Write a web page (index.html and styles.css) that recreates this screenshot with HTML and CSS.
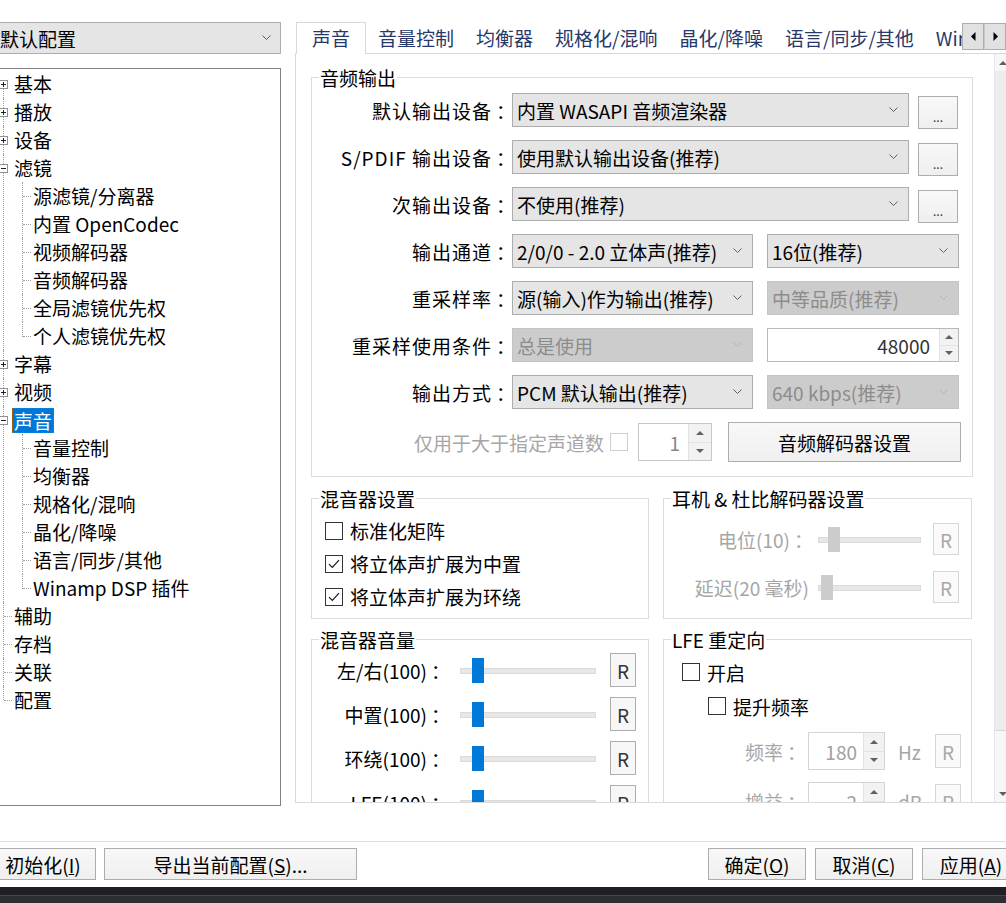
FILE: index.html
```html
<!DOCTYPE html>
<html lang="zh-CN">
<head>
<meta charset="utf-8">
<title>选项</title>
<link rel="stylesheet" href="styles.css">
</head>
<body>
<div class="dialog">
  <div class="main">
    <div class="left">
      <div class="combo profile"><span class="val">默认配置</span><svg class="chev" width="9" height="6" viewBox="0 0 9 6"><path d="M0.5 0.5 L4.5 4.5 L8.5 0.5" fill="none" stroke="#606060"/></svg></div>
      <div class="tree">
        <ul class="l1">
          <li class="first"><div class="row"><span class="box plus"></span><span class="lbl">基本</span></div></li>
          <li><div class="row"><span class="box plus"></span><span class="lbl">播放</span></div></li>
          <li><div class="row"><span class="box plus"></span><span class="lbl">设备</span></div></li>
          <li><div class="row"><span class="box minus"></span><span class="lbl">滤镜</span></div>
            <ul class="l2">
              <li>源滤镜/分离器</li>
              <li>内置 OpenCodec</li>
              <li>视频解码器</li>
              <li>音频解码器</li>
              <li>全局滤镜优先权</li>
              <li>个人滤镜优先权</li>
            </ul>
          </li>
          <li><div class="row"><span class="box plus"></span><span class="lbl">字幕</span></div></li>
          <li><div class="row"><span class="box plus"></span><span class="lbl">视频</span></div></li>
          <li><div class="row"><span class="box minus"></span><span class="lbl sel">声音</span></div>
            <ul class="l2">
              <li>音量控制</li>
              <li>均衡器</li>
              <li>规格化/混响</li>
              <li>晶化/降噪</li>
              <li>语言/同步/其他</li>
              <li>Winamp DSP 插件</li>
            </ul>
          </li>
          <li class="leaf"><div class="row"><span class="lbl">辅助</span></div></li>
          <li class="leaf"><div class="row"><span class="lbl">存档</span></div></li>
          <li class="leaf"><div class="row"><span class="lbl">关联</span></div></li>
          <li class="leaf last"><div class="row"><span class="lbl">配置</span></div></li>
        </ul>
      </div>
    </div>

    <div class="tabctl">
      <div class="tabbar">
        <div class="tabs">
          <div class="tab active">声音</div>
          <div class="tab">音量控制</div>
          <div class="tab">均衡器</div>
          <div class="tab">规格化/混响</div>
          <div class="tab">晶化/降噪</div>
          <div class="tab">语言/同步/其他</div>
          <div class="tab">Winamp DSP 插件</div>
        </div>
        <div class="tabscroll">
          <div class="sbtn"><svg width="5" height="9" viewBox="0 0 5 9"><path d="M4.5 0 L0 4.5 L4.5 9 Z" fill="#000"/></svg></div>
          <div class="sbtn"><svg width="5" height="9" viewBox="0 0 5 9"><path d="M0.5 0 L5 4.5 L0.5 9 Z" fill="#000"/></svg></div>
        </div>
      </div>
      <div class="panel">
        <div class="content">
          <fieldset class="grp g-out">
            <legend>音频输出</legend>
            <div class="frow first">
              <span class="flabel">默认输出设备<span class="colon">：</span></span>
              <div class="combo w397"><span class="val">内置 WASAPI 音频渲染器</span><svg class="chev" width="9" height="6" viewBox="0 0 9 6"><path d="M0.5 0.5 L4.5 4.5 L8.5 0.5" fill="none" stroke="#606060"/></svg></div>
              <div class="btn dots">...</div>
            </div>
            <div class="frow">
              <span class="flabel">S/PDIF 输出设备<span class="colon">：</span></span>
              <div class="combo w397"><span class="val">使用默认输出设备(推荐)</span><svg class="chev" width="9" height="6" viewBox="0 0 9 6"><path d="M0.5 0.5 L4.5 4.5 L8.5 0.5" fill="none" stroke="#606060"/></svg></div>
              <div class="btn dots">...</div>
            </div>
            <div class="frow">
              <span class="flabel">次输出设备<span class="colon">：</span></span>
              <div class="combo w397"><span class="val">不使用(推荐)</span><svg class="chev" width="9" height="6" viewBox="0 0 9 6"><path d="M0.5 0.5 L4.5 4.5 L8.5 0.5" fill="none" stroke="#606060"/></svg></div>
              <div class="btn dots">...</div>
            </div>
            <div class="frow">
              <span class="flabel">输出通道<span class="colon">：</span></span>
              <div class="combo w241"><span class="val">2/0/0 - 2.0 立体声(推荐)</span><svg class="chev" width="9" height="6" viewBox="0 0 9 6"><path d="M0.5 0.5 L4.5 4.5 L8.5 0.5" fill="none" stroke="#606060"/></svg></div>
              <div class="combo w192"><span class="val">16位(推荐)</span><svg class="chev" width="9" height="6" viewBox="0 0 9 6"><path d="M0.5 0.5 L4.5 4.5 L8.5 0.5" fill="none" stroke="#606060"/></svg></div>
            </div>
            <div class="frow">
              <span class="flabel">重采样率<span class="colon">：</span></span>
              <div class="combo w241"><span class="val">源(输入)作为输出(推荐)</span><svg class="chev" width="9" height="6" viewBox="0 0 9 6"><path d="M0.5 0.5 L4.5 4.5 L8.5 0.5" fill="none" stroke="#606060"/></svg></div>
              <div class="combo w192 dis"><span class="val">中等品质(推荐)</span><svg class="chev" width="9" height="6" viewBox="0 0 9 6"><path d="M0.5 0.5 L4.5 4.5 L8.5 0.5" fill="none" stroke="#b4b4b4"/></svg></div>
            </div>
            <div class="frow">
              <span class="flabel">重采样使用条件<span class="colon">：</span></span>
              <div class="combo w241 dis"><span class="val">总是使用</span><svg class="chev" width="9" height="6" viewBox="0 0 9 6"><path d="M0.5 0.5 L4.5 4.5 L8.5 0.5" fill="none" stroke="#b4b4b4"/></svg></div>
              <div class="spin s48"><span class="num">48000</span><div class="spinbtns"><div class="sb"><span class="tri up"></span></div><div class="sb"><span class="tri dn"></span></div></div></div>
            </div>
            <div class="frow">
              <span class="flabel">输出方式<span class="colon">：</span></span>
              <div class="combo w241"><span class="val">PCM 默认输出(推荐)</span><svg class="chev" width="9" height="6" viewBox="0 0 9 6"><path d="M0.5 0.5 L4.5 4.5 L8.5 0.5" fill="none" stroke="#606060"/></svg></div>
              <div class="combo w192 dis"><span class="val">640 kbps(推荐)</span><svg class="chev" width="9" height="6" viewBox="0 0 9 6"><path d="M0.5 0.5 L4.5 4.5 L8.5 0.5" fill="none" stroke="#b4b4b4"/></svg></div>
            </div>
            <div class="frow lastrow">
              <span class="distext">仅用于大于指定声道数</span>
              <span class="cb discb"></span>
              <div class="spin s1"><span class="num">1</span><div class="spinbtns"><div class="sb"><span class="tri up"></span></div><div class="sb"><span class="tri dn"></span></div></div></div>
              <div class="btn decbtn">音频解码器设置</div>
            </div>
          </fieldset>

          <div class="grprow">
            <fieldset class="grp g-mix">
              <legend>混音器设置</legend>
              <div class="crow"><span class="cb"></span><span>标准化矩阵</span></div>
              <div class="crow"><span class="cb"><svg width="16" height="16" viewBox="0 0 16 16"><path d="M3 8.2 L6.3 11.5 L13 4.2" fill="none" stroke="#1a1a1a" stroke-width="1.2"/></svg></span><span>将立体声扩展为中置</span></div>
              <div class="crow"><span class="cb"><svg width="16" height="16" viewBox="0 0 16 16"><path d="M3 8.2 L6.3 11.5 L13 4.2" fill="none" stroke="#1a1a1a" stroke-width="1.2"/></svg></span><span>将立体声扩展为环绕</span></div>
            </fieldset>
            <fieldset class="grp g-dolby">
              <legend>耳机 &amp; 杜比解码器设置</legend>
              <div class="srow">
                <span class="slabel dim">电位(10)<span class="colon">：</span></span>
                <div class="slider sd"><div class="track"></div><div class="thumb" style="left:10px"></div></div>
                <div class="rbtn rdis">R</div>
              </div>
              <div class="srow">
                <span class="slabel dim">延迟(20 毫秒)</span>
                <div class="slider sd"><div class="track"></div><div class="thumb" style="left:3px"></div></div>
                <div class="rbtn rdis">R</div>
              </div>
            </fieldset>
          </div>

          <div class="grprow g3">
            <fieldset class="grp g-vol">
              <legend>混音器音量</legend>
              <div class="vrow">
                <span class="vlabel">左/右(100)<span class="colon">：</span></span>
                <div class="slider sv"><div class="track"></div><div class="thumb on" style="left:12px"></div></div>
                <div class="rbtn">R</div>
              </div>
              <div class="vrow">
                <span class="vlabel">中置(100)<span class="colon">：</span></span>
                <div class="slider sv"><div class="track"></div><div class="thumb on" style="left:12px"></div></div>
                <div class="rbtn">R</div>
              </div>
              <div class="vrow">
                <span class="vlabel">环绕(100)<span class="colon">：</span></span>
                <div class="slider sv"><div class="track"></div><div class="thumb on" style="left:12px"></div></div>
                <div class="rbtn">R</div>
              </div>
              <div class="vrow">
                <span class="vlabel">LFE(100)<span class="colon">：</span></span>
                <div class="slider sv"><div class="track"></div><div class="thumb on" style="left:12px"></div></div>
                <div class="rbtn">R</div>
              </div>
            </fieldset>
            <fieldset class="grp g-lfe">
              <legend>LFE 重定向</legend>
              <div class="lrow l-en"><span class="cb"></span><span>开启</span></div>
              <div class="lrow l-up"><span class="cb"></span><span>提升频率</span></div>
              <div class="lrow l-spin">
                <span class="llabel dim">频率<span class="colon">：</span></span>
                <div class="spin sl"><span class="num">180</span><div class="spinbtns"><div class="sb"><span class="tri up"></span></div><div class="sb"><span class="tri dn"></span></div></div></div>
                <span class="unit dim">Hz</span>
                <div class="rbtn rdis">R</div>
              </div>
              <div class="lrow l-spin">
                <span class="llabel dim">增益<span class="colon">：</span></span>
                <div class="spin sl"><span class="num">-2</span><div class="spinbtns"><div class="sb"><span class="tri up"></span></div><div class="sb"><span class="tri dn"></span></div></div></div>
                <span class="unit dim">dB</span>
                <div class="rbtn rdis">R</div>
              </div>
            </fieldset>
          </div>
        </div>
        <div class="vscroll">
          <div class="sarrow"><span class="tri up"></span></div>
          <div class="vthumb"></div>
          <div class="vtrack"></div>
          <div class="sarrow"><span class="tri dn"></span></div>
        </div>
      </div>
    </div>
  </div>

  <div class="footer">
    <div class="fgroup">
      <div class="btn fbtn b-init">初始化(<u>I</u>)</div>
      <div class="btn fbtn b-export">导出当前配置(<u>S</u>)...</div>
    </div>
    <div class="fgroup right">
      <div class="btn fbtn b-std">确定(<u>O</u>)</div>
      <div class="btn fbtn b-std">取消(<u>C</u>)</div>
      <div class="btn fbtn b-std">应用(<u>A</u>)</div>
    </div>
  </div>
  <div class="taskbar"></div>
</div>
</body>
</html>
```

FILE: styles.css
```css
* { box-sizing: border-box; }
html, body { margin: 0; padding: 0; }
body {
  width: 1006px;
  height: 903px;
  overflow: hidden;
  background: #ffffff;
  font-family: "Noto Sans CJK SC", "Microsoft YaHei", sans-serif;
  font-size: 19px;
  color: #000;
}
.dialog {
  margin-left: -10px;
  width: 1022px;
  height: 903px;
  display: flex;
  flex-direction: column;
}
.main {
  display: flex;
  gap: 14px;
  padding-top: 22px;
  height: 806px;
}
.colon { display: inline-block; width: 19px; text-align: center; padding-left: 4px; letter-spacing: 0; }

/* ---------- combos ---------- */
.combo {
  display: flex;
  align-items: center;
  height: 34px;
  background: #e5e5e5;
  border: 1px solid #adadad;
  padding: 0 10px 0 4px;
  white-space: nowrap;
  flex: none;
}
.combo .val { flex: 1; }
.combo .chev { flex: none; }
.combo.dis { background: #cccccc; border-color: #c4c4c4; color: #8c8c8c; }

/* ---------- left column ---------- */
.left { width: 291px; display: flex; flex-direction: column; flex: none; }
.profile { height: 32px; padding-left: 9px; padding-right: 9px; }
.tree {
  margin-top: 14px;
  flex: 1;
  border: 1px solid #828282;
  padding: 1px 0 0 9px;
  overflow: hidden;
  background: #fff;
}
.tree ul { list-style: none; margin: 0; padding: 0; }
.l1 > li { position: relative; }
.l1 > li::before {
  content: "";
  position: absolute;
  left: 3px; top: 0; bottom: 0;
  border-left: 1px dotted #a0a0a0;
}
.l1 > li.first::before { top: 14px; }
.l1 > li.last::before { bottom: auto; height: 14px; }
.row {
  position: relative;
  height: 28px;
  display: flex;
  align-items: center;
  padding-left: 14px;
  padding-bottom: 2px;
  white-space: nowrap;
}
.l1 > li.leaf > .row::before {
  content: "";
  position: absolute;
  left: 4px; top: 14px;
  width: 8px;
  border-top: 1px dotted #a0a0a0;
}
.box {
  position: absolute;
  left: -1px; top: 10px;
  width: 9px; height: 9px;
  border: 1px solid #919191;
  background: #fff;
  z-index: 1;
}
.box::before {
  content: "";
  position: absolute;
  left: 1px; top: 3px;
  width: 5px; height: 1px;
  background: #222;
}
.box.plus::after {
  content: "";
  position: absolute;
  left: 3px; top: 1px;
  width: 1px; height: 5px;
  background: #222;
}
.lbl { line-height: 25px; }
.sel {
  background: #0078d7;
  color: #fff;
  padding: 0 2px;
  margin-left: -2px;
  margin-top: 2px;
  height: 25px;
  outline: 1px dotted #9a6a1a;
  outline-offset: -1px;
}
.l2 > li {
  position: relative;
  height: 28px;
  padding-left: 33px;
  padding-bottom: 2px;
  display: flex;
  align-items: center;
  white-space: nowrap;
}
.l2 > li::before {
  content: "";
  position: absolute;
  left: 22px; top: 0;
  height: 28px;
  border-left: 1px dotted #a0a0a0;
}
.l2 > li:last-child::before { height: 15px; }
.l2 > li::after {
  content: "";
  position: absolute;
  left: 23px; top: 14px;
  width: 8px;
  border-top: 1px dotted #a0a0a0;
}

/* ---------- tab control ---------- */
.tabctl { width: 717px; flex: none; display: flex; flex-direction: column; }
.tabbar { display: flex; height: 31px; width: 717px; }
.tabs { flex: none; width: 667px; display: flex; overflow: hidden; height: 32px; }
.tab {
  flex: none;
  padding: 0 11px;
  height: 32px;
  line-height: 31px;
  white-space: nowrap;
  color: #27386a;
}
.tab.active {
  position: relative;
  z-index: 2;
  margin-left: 1px;
  margin-right: 1px;
  padding: 0 15px;
  border: 1px solid #d9d9d9;
  border-bottom: none;
  background: #fff;
  line-height: 29px;
}
.tabscroll { display: flex; margin-top: 1px; height: 27px; width: 44px; flex: none; }
.sbtn {
  width: 22px; height: 27px;
  flex: none;
  border: 1px solid #adadad;
  background: #e1e1e1;
  display: flex; align-items: center; justify-content: center;
}
.sbtn + .sbtn { border-left: 1px solid #c8c8c8; }
.tri { width: 0; height: 0; display: block; }
.tri.up { border-left: 4px solid transparent; border-right: 4px solid transparent; border-bottom: 4px solid #606060; }
.tri.dn { border-left: 4px solid transparent; border-right: 4px solid transparent; border-top: 4px solid #606060; }

.panel {
  height: 750px;
  border: 1px solid #d9d9d9;
  display: flex;
  background: #fff;
}
.content { flex: 1; min-width: 0; overflow: hidden; padding-left: 15px; }
.vscroll {
  width: 17px;
  flex: none;
  display: flex;
  flex-direction: column;
  background: #f7f7f7;
  border-left: 1px solid #e6e6e6;
}
.sarrow { height: 17px; display: flex; align-items: center; justify-content: center; flex: none; }
.vthumb { height: 660px; background: #ececec; border-bottom: 1px solid #dadada; flex: none; }
.vtrack { flex: 1; }

/* ---------- group boxes ---------- */
.grp {
  border: 1px solid #dcdcdc;
  margin: 0;
  padding: 0;
  min-width: 0;
}
.grp legend {
  padding: 0 1px;
  margin-left: 7px;
  line-height: 19px;
  font-size: 19px;
}
.g-out { width: 662px; margin-top: 14px; padding-bottom: 14px; }
.frow { display: flex; align-items: center; height: 34px; margin-top: 13px; }
.frow.first { margin-top: 6px; }
.flabel { width: 199px; text-align: right; white-space: nowrap; margin-right: 1px; flex: none; letter-spacing: 1px; }
.w397 { width: 397px; }
.w241 { width: 241px; }
.w192 { width: 192px; margin-left: 14px; }
.btn {
  border: 1px solid #adadad;
  background: linear-gradient(#f8f8f8, #efefef);
  display: flex;
  align-items: center;
  justify-content: center;
  white-space: nowrap;
  flex: none;
}
.dots { width: 40px; height: 33px; margin-left: 9px; margin-top: 5px; font-size: 12px; padding-top: 8px; color: #333; }

.spin {
  display: flex;
  background: #fff;
  border: 1px solid #b8b8b8;
  flex: none;
}
.spin .num { flex: 1; text-align: right; align-self: center; }
.spinbtns { width: 19px; display: flex; flex-direction: column; border-left: 1px solid #e2e2e2; flex: none; }
.sb { flex: 1; display: flex; align-items: center; justify-content: center; background: #f2f2f2; }
.sb + .sb { border-top: 1px solid #e2e2e2; }
.s48 { width: 192px; height: 34px; margin-left: 14px; }
.s48 .num { padding-right: 9px; color: #333; }

.frow.lastrow { height: 40px; justify-content: flex-end; padding-right: 11px; }
.distext { color: #a6a6a6; white-space: nowrap; }
.cb {
  width: 18px; height: 18px;
  border: 1px solid #333;
  background: #fff;
  display: flex; align-items: center; justify-content: center;
  flex: none;
}
.cb.discb { border-color: #cfcfcf; margin-left: 6px; }
.s1 { width: 74px; height: 38px; margin-left: 10px; border-color: #c8c8c8; }
.s1 .num { padding-right: 8px; color: #888; }
.s1 .spinbtns { width: 23px; }
.decbtn { width: 233px; height: 40px; margin-left: 16px; }

.grprow { display: flex; gap: 14px; margin-top: 12px; }
.grprow.g3 { margin-top: 11px; }
.g-mix { width: 338px; padding-bottom: 5px; }
.g-dolby { width: 309px; }
.crow { display: flex; align-items: center; height: 33px; padding-left: 13px; white-space: nowrap; }
.g-mix .crow:first-of-type { margin-top: 6px; }
.crow .cb { margin-right: 7px; }

.dim { color: #a6a6a6; }
.srow { display: flex; align-items: center; height: 48px; }
.g-dolby .srow:first-of-type { margin-top: 7px; }
.slabel { width: 145px; text-align: right; white-space: nowrap; flex: none; }
.slider { position: relative; height: 25px; flex: none; }
.slider .track {
  margin-top: 10px;
  height: 6px;
  background: #e7e7e7;
  border: 1px solid #dadada;
}
.slider .thumb {
  position: absolute;
  top: 0;
  width: 12px; height: 25px;
  background: #cccccc;
}
.slider .thumb.on { background: #0078d7; }
.sd { width: 103px; margin-left: 9px; }
.rbtn {
  width: 26px; height: 34px;
  border: 1px solid #adadad;
  background: #f7f7f7;
  display: flex; align-items: center; justify-content: center;
  color: #333;
  flex: none;
}
.rbtn.rdis { border-color: #d6d6d6; color: #a8a8a8; background: #fafafa; }
.sd + .rbtn { margin-left: 12px; height: 32px; }

.g-vol { width: 338px; height: 400px; }
.g-lfe { width: 309px; height: 400px; }
.vrow { display: flex; align-items: center; height: 44px; }
.g-vol .vrow:first-of-type { margin-top: -1px; }
.vlabel { width: 134px; text-align: right; white-space: nowrap; flex: none; }
.sv { width: 136px; margin-left: 14px; }
.sv + .rbtn { margin-left: 14px; }

.lrow { display: flex; align-items: center; white-space: nowrap; }
.l-en { height: 34px; margin-top: 6px; padding-left: 18px; }
.l-up { height: 34px; padding-left: 44px; }
.lrow .cb { margin-right: 7px; }
.l-spin { height: 44px; margin-top: 6px; }
.llabel { width: 138px; text-align: right; flex: none; }
.sl { width: 77px; height: 38px; margin-left: 6px; border-color: #d4d4d4; }
.sl .num { padding-right: 6px; color: #a0a0a0; }
.sl .spinbtns { width: 21px; }
.unit { width: 50px; padding-left: 13px; flex: none; }

/* ---------- footer ---------- */
.footer {
  margin-top: 35px;
  border-top: 1px solid #dfdfdf;
  padding-top: 6px;
  display: flex;
  justify-content: space-between;
  margin-right: -8px;
}
.fgroup { display: flex; gap: 8px; }
.fgroup.right { gap: 9px; }
.fbtn { height: 32px; }
.b-init { width: 106px; }
.b-export { width: 253px; }
.b-std { width: 98px; }
.taskbar {
  margin-top: 7px;
  height: 16px;
  margin-right: -20px;
  background: linear-gradient(#1f2024 0, #1f2024 8px, #46484d 8px, #46484d 9px, #2c2e33 9px);
}
```
